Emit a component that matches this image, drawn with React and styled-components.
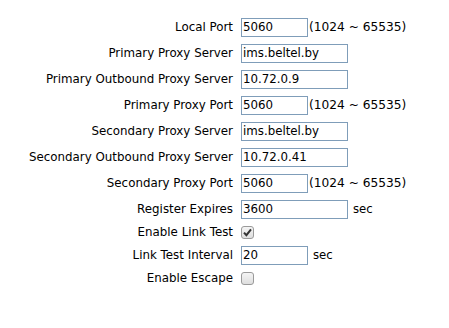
import styled, { createGlobalStyle } from "styled-components";

const GlobalStyle = createGlobalStyle`
  html, body {
    margin: 0;
    padding: 0;
    background: #ffffff;
  }
  body {
    font-family: "DejaVu Sans", Verdana, sans-serif;
    color: #000000;
  }
`;

const rows = [
  { label: "Local Port", type: "text", value: "5060", size: "short", hint: "(1024 ~ 65535)" },
  { label: "Primary Proxy Server", type: "text", value: "ims.beltel.by", size: "wide" },
  { label: "Primary Outbound Proxy Server", type: "text", value: "10.72.0.9", size: "wide" },
  { label: "Primary Proxy Port", type: "text", value: "5060", size: "short", hint: "(1024 ~ 65535)" },
  { label: "Secondary Proxy Server", type: "text", value: "ims.beltel.by", size: "wide" },
  { label: "Secondary Outbound Proxy Server", type: "text", value: "10.72.0.41", size: "wide" },
  { label: "Secondary Proxy Port", type: "text", value: "5060", size: "short", hint: "(1024 ~ 65535)" },
  { label: "Register Expires", type: "text", value: "3600", size: "wide", unit: "sec" },
  { label: "Enable Link Test", type: "check", checked: true },
  { label: "Link Test Interval", type: "text", value: "20", size: "short", unit: "sec" },
  { label: "Enable Escape", type: "check", checked: false },
];

const CheckMark = () => (
  <svg width="9" height="9" viewBox="0 0 9 9">
    <path d="M1 4.6 L3.4 7.2 L8 1.4" fill="none" stroke="#333333" strokeWidth="2" />
  </svg>
);

const App = () => {
  return (
    <>
      <GlobalStyle />
      <Form>
        {rows.map((row) => (
          <Row key={row.label} $check={row.type === "check"}>
            <Label>{row.label}</Label>
            <Field>
              {row.type === "check" ? (
                <CheckBox>{row.checked && <CheckMark />}</CheckBox>
              ) : (
                <TextInput $size={row.size} defaultValue={row.value} readOnly />
              )}
              {row.hint && <Hint>{row.hint}</Hint>}
              {row.unit && <Unit>{row.unit}</Unit>}
            </Field>
          </Row>
        ))}
      </Form>
    </>
  );
};
export default App;

const Form = styled.div`
  display: flex;
  flex-direction: column;
  padding-top: 14px;
`;

const Row = styled.div`
  display: grid;
  grid-template-columns: 233px auto;
  column-gap: 8px;
  align-items: center;
  height: ${({ $check }) => ($check ? "20px" : "26px")};
`;

const Label = styled.div`
  text-align: right;
  font-size: 11.85px;
  white-space: nowrap;
`;

const Field = styled.div`
  display: flex;
  align-items: center;
`;

const TextInput = styled.input`
  box-sizing: border-box;
  width: ${({ $size }) => ($size === "short" ? "67px" : "107px")};
  height: 19px;
  margin: 0;
  padding: 0 1px;
  border: 1px solid #7f9db9;
  background: #ffffff;
  font-family: "DejaVu Sans", Verdana, sans-serif;
  font-size: 11.8px;
  color: #000000;
  outline: none;
`;

const Hint = styled.span`
  margin-left: 1px;
  font-size: 12.2px;
  white-space: nowrap;
`;

const Unit = styled.span`
  margin-left: 5px;
  font-size: 11.7px;
`;

const CheckBox = styled.span`
  box-sizing: border-box;
  display: flex;
  align-items: center;
  justify-content: center;
  width: 13px;
  height: 13px;
  margin-top: 1px;
  border: 1px solid #9a9a9a;
  border-radius: 3px;
  background: linear-gradient(#f4f4f4, #dedede);
`;
